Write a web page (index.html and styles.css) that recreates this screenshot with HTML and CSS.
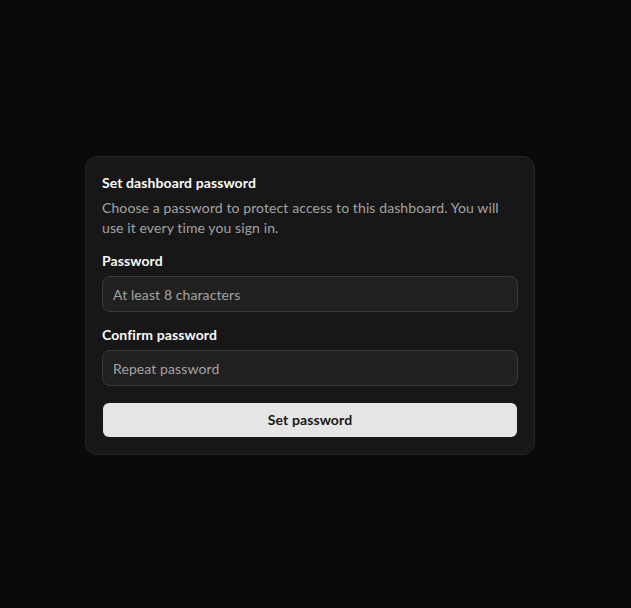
FILE: index.html
```html
<!DOCTYPE html>
<html lang="en">
<head>
<meta charset="utf-8">
<title>Set dashboard password</title>
<link rel="stylesheet" href="styles.css">
</head>
<body>
<main class="page">
  <form class="card" onsubmit="return false">
    <h1 class="title">Set dashboard password</h1>
    <p class="desc">Choose a password to protect access to this dashboard. You will use it every time you sign in.</p>
    <label class="field">
      <span class="label">Password</span>
      <input class="input" type="password" placeholder="At least 8 characters">
    </label>
    <label class="field">
      <span class="label">Confirm password</span>
      <input class="input" type="password" placeholder="Repeat password">
    </label>
    <button class="btn" type="submit">Set password</button>
  </form>
</main>
</body>
</html>
```
FILE: styles.css
```css
* { box-sizing: border-box; }
html, body {
  margin: 0;
  padding: 0;
  background: #0a0a0a;
  height: 100%;
}
body {
  font-family: Lato, "Liberation Sans", sans-serif;
  font-size: 14px;
  line-height: 20px;
  color: #fafafa;
  letter-spacing: 0.1px;
}
.page {
  height: 608px;
  display: flex;
  justify-content: center;
  padding: 156px 11px 0 0;
}
.card {
  width: 450px;
  height: 299px;
  background: #171717;
  border: 1px solid #262626;
  border-radius: 12px;
  padding: 16px;
  display: flex;
  flex-direction: column;
}
.title {
  margin: 0;
  font-size: 14px;
  line-height: 20px;
  font-weight: 700;
  color: #fafafa;
}
.desc {
  margin: 5px 0 0;
  color: #a3a3a3;
}
.field {
  display: flex;
  flex-direction: column;
  margin-top: 13px;
}
.label {
  font-weight: 700;
  color: #fafafa;
  margin-bottom: 5px;
}
.input {
  height: 36px;
  width: 100%;
  background: #212121;
  border: 1px solid #3a3a3a;
  border-radius: 8px;
  padding: 0 10px;
  font: inherit;
  letter-spacing: 0.1px;
  color: #fafafa;
  outline: none;
}
.input::placeholder { color: #a3a3a3; }
.btn {
  margin: 17px 1px 0;
  height: 34px;
  background: #e5e5e5;
  color: #171717;
  border: none;
  border-radius: 6px;
  font: inherit;
  font-weight: 700;
  letter-spacing: 0.1px;
  cursor: pointer;
}
```
